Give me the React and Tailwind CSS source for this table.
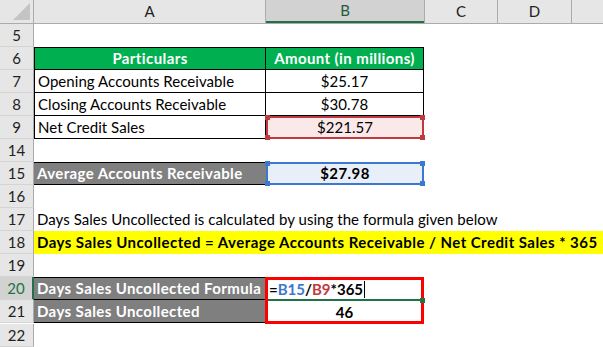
import React from "react";

const FONT = { fontFamily: "Lato, 'Open Sans', sans-serif" };

function RowHead({ n, active }) {
  return (
    <div
      className={`w-[34px] h-[23px] shrink-0 flex items-center justify-center text-[15px] tracking-normal border-b border-[#d4d4d4] ${
        active
          ? "bg-[#d2d2d2] text-[#217346] border-r-2 border-r-[#217346]"
          : "bg-[#e6e6e6] text-[#222] border-r border-r-[#ababab]"
      }`}
    >
      {n}
    </div>
  );
}

function Handles({ color }) {
  const sq = `absolute w-[5px] h-[5px] ${color}`;
  return (
    <>
      <span className={`${sq} -left-[3px] -top-[3px]`} />
      <span className={`${sq} -right-[3px] -top-[3px]`} />
      <span className={`${sq} -left-[3px] -bottom-[3px]`} />
      <span className={`${sq} -right-[3px] -bottom-[3px]`} />
    </>
  );
}

function Row({ n, active, children }) {
  return (
    <div className="flex h-[23px]">
      <RowHead n={n} active={active} />
      {children}
    </div>
  );
}

export default function App() {
  return (
    <div className="w-[603px] h-[347px] bg-white overflow-hidden text-[15px] text-black tracking-[0.05px]" style={FONT}>
      {/* column headers */}
      <div className="flex h-[24px] bg-[#e6e6e6] border-b border-[#ababab] tracking-normal">
        <div className="relative w-[34px] shrink-0 border-r border-[#ababab]">
          <span className="absolute right-[3px] bottom-[3px] w-0 h-0 border-l-[17px] border-l-transparent border-b-[17px] border-b-[#c4c4c4]" />
        </div>
        <div className="w-[232px] shrink-0 flex items-center justify-center text-[#222] border-r border-[#ababab]">A</div>
        <div className="w-[158px] shrink-0 flex items-center justify-center text-[#215a3c] bg-[#d2d2d2] border-b-2 border-[#217346]">B</div>
        <div className="w-[74px] shrink-0 flex items-center justify-center text-[#222] border-r border-l border-[#ababab]">C</div>
        <div className="w-[74px] shrink-0 flex items-center justify-center text-[#222] border-r border-[#ababab]">D</div>
        <div className="flex-1" />
      </div>

      <Row n={5} />

      <Row n={6}>
        <div className="w-[232px] shrink-0 flex items-center justify-center font-bold tracking-[0.4px] text-white bg-[#00b050] border border-black">Particulars</div>
        <div className="w-[158px] shrink-0 flex items-center justify-center font-bold tracking-[0.4px] text-white bg-[#00b050] border-y border-r border-black">Amount (in millions)</div>
      </Row>
      <Row n={7}>
        <div className="w-[232px] shrink-0 flex items-center pl-[3px] border-x border-b border-black">Opening Accounts Receivable</div>
        <div className="w-[158px] shrink-0 flex items-center justify-center border-r border-b border-black">$25.17</div>
      </Row>
      <Row n={8}>
        <div className="w-[232px] shrink-0 flex items-center pl-[3px] border-x border-b border-black">Closing Accounts Receivable</div>
        <div className="w-[158px] shrink-0 flex items-center justify-center border-r border-b border-black">$30.78</div>
      </Row>
      <Row n={9}>
        <div className="w-[232px] shrink-0 flex items-center pl-[3px] border-x border-b border-black">Net Credit Sales</div>
        <div className="relative w-[158px] shrink-0 flex items-center justify-center bg-[#fbe9ea] border-2 border-[#c0393f]">
          $221.57
          <Handles color="bg-[#c0393f]" />
        </div>
      </Row>
      <Row n={14} />
      <Row n={15}>
        <div className="w-[232px] shrink-0 flex items-center pl-[3px] font-bold tracking-[0.4px] text-white bg-[#808080] border-y border-black">Average Accounts Receivable</div>
        <div className="relative w-[158px] shrink-0 flex items-center justify-center font-bold tracking-[0.4px] bg-[#e9eff9] border-2 border-[#3c78d0]">
          $27.98
          <Handles color="bg-[#3c78d0]" />
        </div>
      </Row>
      <Row n={16} />
      <Row n={17}>
        <div className="flex items-center pl-[3px] whitespace-nowrap">Days Sales Uncollected is calculated by using the formula given below</div>
      </Row>
      <Row n={18}>
        <div className="flex-1 flex items-center pl-[3px] whitespace-nowrap font-bold tracking-[0.45px] bg-[#ffff00]">
          Days Sales Uncollected = Average Accounts Receivable / Net Credit Sales * 365
        </div>
      </Row>
      <Row n={19} />

      <div className="flex">
        <div className="flex flex-col">
          <Row n={20} active>
            <div className="w-[232px] shrink-0 flex items-center pl-[3px] font-bold tracking-[0.4px] text-white bg-[#7f7f7f] border-y border-black">Days Sales Uncollected Formula</div>
          </Row>
          <Row n={21}>
            <div className="w-[232px] shrink-0 flex items-center pl-[3px] font-bold tracking-[0.4px] text-white bg-[#7f7f7f] border-b border-black">Days Sales Uncollected</div>
          </Row>
        </div>
        <div className="w-[159px] h-[47px] -ml-[1px] shrink-0 flex flex-col border-[3px] border-[#ff0000]">
          <div className="relative h-[21px] flex items-center pl-[1px] font-bold tracking-normal border-b-2 border-[#217346]">
            <span>=</span>
            <span className="text-[#3c78d0]">B15</span>
            <span>/</span>
            <span className="text-[#c0393f]">B9</span>
            <span>*365</span>
            <span className="ml-[1px] w-px h-[17px] bg-black" />
            <span className="absolute -right-[4px] -bottom-[4px] w-[5px] h-[5px] bg-[#217346]" />
          </div>
          <div className="flex-1 flex items-center justify-center font-bold">46</div>
        </div>
      </div>
      <Row n={22} />
    </div>
  );
}
